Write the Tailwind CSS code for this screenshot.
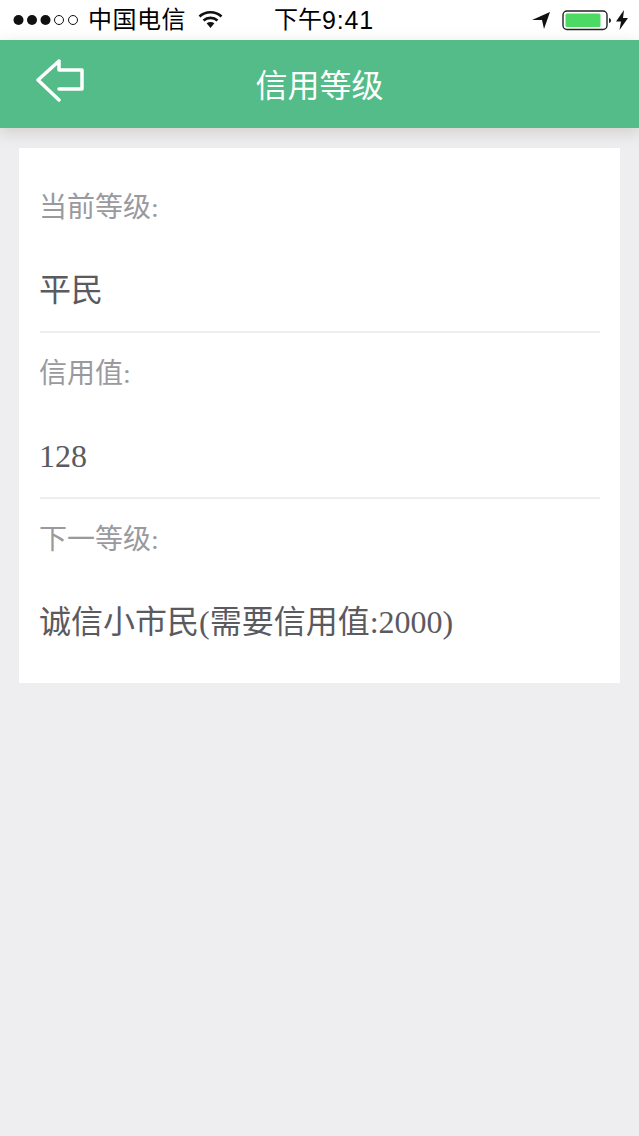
<!DOCTYPE html>
<html lang="zh-CN">

<head>
    <meta charset="UTF-8">
    <meta name="viewport" content="width=device-width, initial-scale=1.0">
    <title>信用等级</title>
    <script src="https://cdn.jsdelivr.net/npm/@tailwindcss/browser@4"></script>
</head>

<body class="bg-[#eeedef] h-[1136px] overflow-hidden font-['Liberation_Serif','Noto_Sans_CJK_SC',serif]">

    <!-- Status bar -->
    <div class="h-10 bg-white flex items-center justify-between pl-[13px] pr-[10px] relative text-black font-['Liberation_Sans','Noto_Sans_CJK_SC',sans-serif]">
        <div class="flex items-center">
            <svg width="68" height="14" viewBox="0 0 68 14">
                <circle cx="5.500" cy="7" r="5" fill="#111" />
                <circle cx="19" cy="7" r="5" fill="#111" />
                <circle cx="32.500" cy="7" r="5" fill="#111" />
                <circle cx="46" cy="7" r="4.500" fill="none" stroke="#111" stroke-width="1" />
                <circle cx="60" cy="7" r="4.500" fill="none" stroke="#111" stroke-width="1" />
            </svg>
            <span class="ml-[7px] text-[24px] leading-none tracking-[0.5px]">中国电信</span>
            <svg class="ml-[12px] -mt-[3px]" width="25" height="20" viewBox="0 0 25 20">
                <path d="M1.500 7.500C7.500 1.800 17.500 1.800 23.500 7.500" fill="none" stroke="#111" stroke-width="2.600" />
                <path d="M5.500 11.500C9.500 8 15.500 8 19.500 11.500" fill="none" stroke="#111" stroke-width="2.600" />
                <path d="M8.600 14.300C11 12.500 14 12.500 16.400 14.300L12.500 19Z" fill="#111" />
            </svg>
        </div>
        <div class="absolute left-[274px] top-0 h-10 flex items-center text-[24px] leading-none">下午<span class="text-[25px] tracking-[0.8px]">9:41</span></div>
        <div class="flex items-center">
            <svg class="mr-[1px]" width="20" height="20" viewBox="0 0 20 20">
                <path d="M1 10L19 2L13 19L11 10Z" fill="#111" />
            </svg>
            <svg class="ml-[10px]" width="50" height="22" viewBox="0 0 50 22">
                <rect x="1" y="2" width="44" height="18.500" rx="4" fill="#fff" stroke="#222" stroke-width="1.400" />
                <rect x="3.500" y="4.500" width="35" height="13.500" rx="1.500" fill="#4cd964" />
                <path d="M47 9v5c1.500-.5 2-1.500 2-2.500s-.5-2-2-2.500Z" fill="#222" />
            </svg>
            <svg class="ml-[3px]" width="14" height="22" viewBox="0 0 14 22">
                <path d="M9 1L1 12.500H6L4.500 21L13 9H8Z" fill="#111" />
            </svg>
        </div>
    </div>

    <!-- Header -->
    <header class="h-[88px] bg-[#53bc88] relative flex items-center justify-center shadow-[0_4px_14px_rgba(120,120,100,0.25)]">
        <a class="absolute left-[36px] top-[19px]">
            <svg width="48" height="44" viewBox="0 0 48 44">
                <path d="M23 2L2 21L23 41M23 2V11H46V30H23" fill="none" stroke="#fff" stroke-width="3.500" stroke-linecap="round" stroke-linejoin="round" />
            </svg>
        </a>
        <h1 class="text-white text-[32px] leading-none font-normal font-['Noto_Sans_CJK_SC',sans-serif] -mt-[2px]">信用等级</h1>
    </header>

    <!-- Card -->
    <main class="mt-5 mx-[19px] bg-white pl-[21px] pr-5">
        <div class="h-[185px] pt-[43px] border-b-2 border-[#eeedef]">
            <p class="-ml-px text-[28px] leading-[34px] text-[#9a9a9e]">当前等级:</p>
            <p class="-ml-px mt-[48px] text-[32px] leading-[34px] text-[#5a5a5f]">平民</p>
        </div>
        <div class="h-[166px] pt-[24px] border-b-2 border-[#eeedef]">
            <p class="-ml-px text-[28px] leading-[34px] text-[#9a9a9e]">信用值:</p>
            <p class="-ml-px mt-[48px] text-[32px] leading-[34px] text-[#5a5a5f]">128</p>
        </div>
        <div class="h-[184px] pt-[24px]">
            <p class="-ml-px text-[28px] leading-[34px] text-[#9a9a9e]">下一等级:</p>
            <p class="-ml-px mt-[48px] text-[32px] leading-[34px] text-[#5a5a5f]">诚信小市民(需要信用值:2000)</p>
        </div>
    </main>

</body>

</html>
